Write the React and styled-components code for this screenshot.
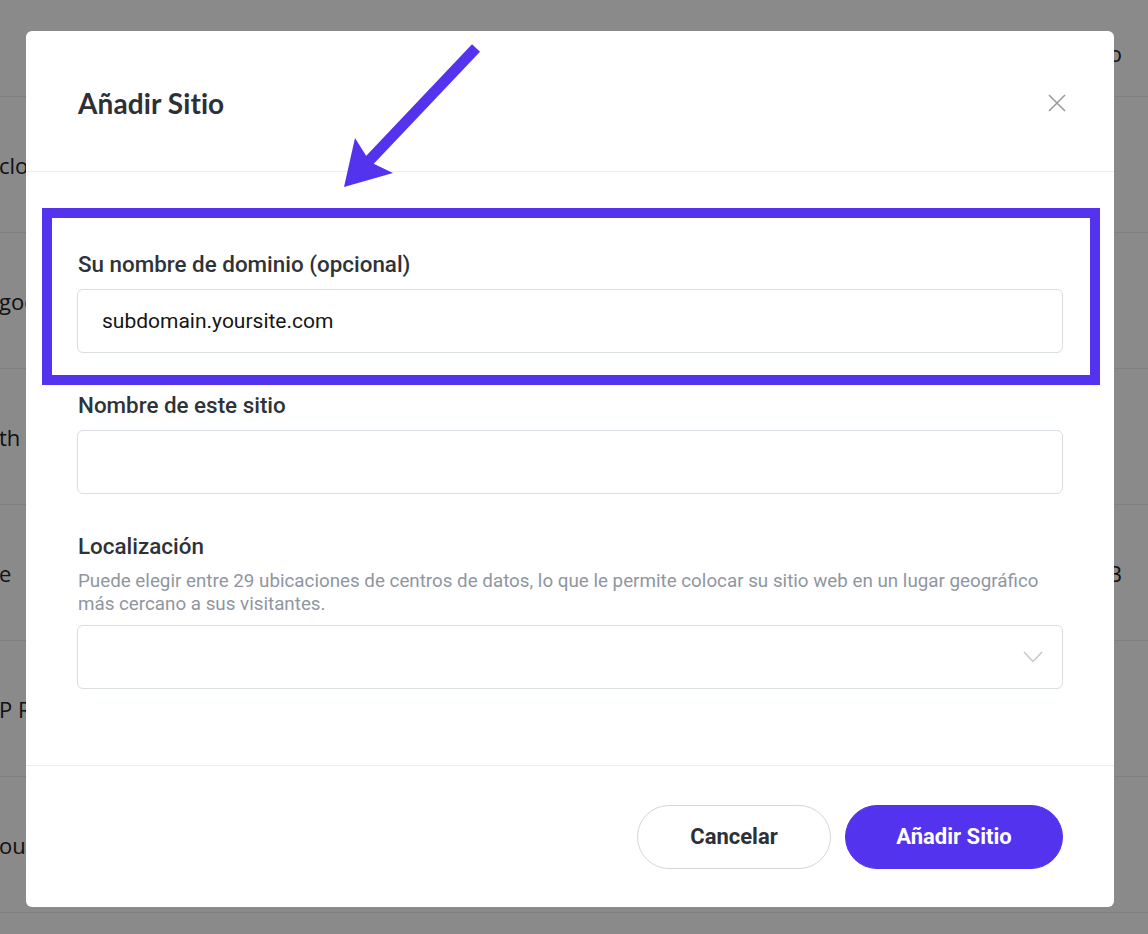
import React from "react";
import styled, { createGlobalStyle } from "styled-components";

const GlobalStyle = createGlobalStyle`
  html, body {
    margin: 0;
    padding: 0;
    background: #fff;
    font-family: Roboto, "Liberation Sans", sans-serif;
  }
  * { box-sizing: border-box; }
`;

const bgRows = [
  { left: "", right: "o", short: true },
  { left: "clou", right: "" },
  { left: "goo", right: "" },
  { left: "th", right: "" },
  { left: "e", right: "B" },
  { left: "P R", right: "" },
  { left: "ouc", right: "" },
];

export default function App() {
  return (
    <>
      <GlobalStyle />
      <Page>
        {bgRows.map((r, i) => (
          <BgRow key={i} $short={r.short}>
            <span>{r.left}</span>
            <span>{r.right}</span>
          </BgRow>
        ))}
      </Page>

      <Overlay>
        <Modal>
          <Arrow width="170" height="170" viewBox="0 0 170 170">
            <line x1="150" y1="17" x2="40" y2="133" stroke="#5333ed" strokeWidth="11" />
            <polygon points="18,156 29,107 44,131 67,142" fill="#5333ed" />
          </Arrow>

          <Header>
            <Title>Añadir Sitio</Title>
            <CloseButton aria-label="Cerrar">
              <svg width="18" height="18" viewBox="0 0 18 18">
                <path d="M1 1 L17 17 M17 1 L1 17" stroke="#9a9a9a" strokeWidth="1.6" />
              </svg>
            </CloseButton>
          </Header>

          <Body>
            <Field>
              <Highlight />
              <Label>Su nombre de dominio (opcional)</Label>
              <Input defaultValue="subdomain.yoursite.com" />
            </Field>

            <Field>
              <Label>Nombre de este sitio</Label>
              <Input />
            </Field>

            <Field $last>
              <Label>Localización</Label>
              <Help>
                Puede elegir entre 29 ubicaciones de centros de datos, lo que le permite
                colocar su sitio web en un lugar geográfico más cercano a sus visitantes.
              </Help>
              <Select>
                <svg width="20" height="12" viewBox="0 0 20 12">
                  <path d="M1 1 L10 10.5 L19 1" fill="none" stroke="#c3c7cd" strokeWidth="1.5" />
                </svg>
              </Select>
            </Field>
          </Body>

          <Footer>
            <Button>Cancelar</Button>
            <Button $primary>Añadir Sitio</Button>
          </Footer>
        </Modal>
      </Overlay>
    </>
  );
}

const Page = styled.div`
  width: 1148px;
  height: 934px;
  overflow: hidden;
  font-family: "Open Sans", "Liberation Sans", sans-serif;
  font-size: 22px;
  color: #222;
`;

const BgRow = styled.div`
  height: ${(p) => (p.$short ? "97px" : "136px")};
  border-bottom: 1px solid #ececec;
  display: flex;
  justify-content: space-between;
  align-items: ${(p) => (p.$short ? "flex-start" : "center")};
  padding-top: ${(p) => (p.$short ? "38px" : "0")};
  margin-left: -1px;

  span:last-child {
    margin-right: 26px;
  }
`;

const Overlay = styled.div`
  position: fixed;
  inset: 0;
  background: rgba(0, 0, 0, 0.46);
  padding: 31px 34px 0 26px;
`;

const Modal = styled.div`
  position: relative;
  width: 1088px;
  height: 876px;
  background: #fff;
  border-radius: 6px;
  display: flex;
  flex-direction: column;
`;

const Arrow = styled.svg`
  position: absolute;
  left: 300px;
  top: 0;
`;

const Header = styled.div`
  height: 141px;
  border-bottom: 1px solid #ececec;
  display: flex;
  align-items: center;
  justify-content: space-between;
  padding: 3px 48px 0 52px;
`;

const Title = styled.h2`
  margin: 0;
  font-family: Lato, "Liberation Sans", sans-serif;
  font-weight: 700;
  font-size: 28px;
  letter-spacing: 0.1px;
  color: #2d3035;
`;

const CloseButton = styled.button`
  border: 0;
  background: none;
  padding: 0;
  display: flex;
  cursor: pointer;
`;

const Body = styled.div`
  flex: 1;
  padding: 78px 51px 0 51px;
`;

const Field = styled.div`
  position: relative;
  margin-bottom: ${(p) => (p.$last ? "0" : "38px")};
`;

const Highlight = styled.div`
  position: absolute;
  left: -35px;
  right: -37px;
  top: -42px;
  bottom: -32px;
  border: 10px solid #5333ed;
  pointer-events: none;
`;

const Label = styled.div`
  font-size: 22.4px;
  font-weight: 500;
  line-height: 28px;
  color: #2e3338;
  margin-bottom: 11px;
  padding-left: 1px;
`;

const Input = styled.input`
  display: block;
  width: 100%;
  height: 64px;
  border: 1px solid #d9dde4;
  border-radius: 6px;
  padding: 0 24px;
  font-family: Roboto, "Liberation Sans", sans-serif;
  font-size: 21px;
  color: #151515;
  outline: none;
`;

const Help = styled.div`
  font-size: 18.8px;
  line-height: 23px;
  color: #8f969f;
  margin-top: -1px;
  margin-bottom: 9px;
  padding-left: 1px;
`;

const Select = styled.div`
  height: 64px;
  border: 1px solid #d9dde4;
  border-radius: 6px;
  display: flex;
  align-items: center;
  justify-content: flex-end;
  padding-right: 19px;
`;

const Footer = styled.div`
  height: 142px;
  border-top: 1px solid #ececec;
  display: flex;
  align-items: center;
  justify-content: flex-end;
  gap: 14px;
  padding: 0 51px 0 0;
`;

const Button = styled.button`
  height: 64px;
  border-radius: 32px;
  padding: 0;
  width: ${(p) => (p.$primary ? "218px" : "194px")};
  border: 1px solid ${(p) => (p.$primary ? "#5333ed" : "#d3d6de")};
  background: ${(p) => (p.$primary ? "#5333ed" : "#fff")};
  color: ${(p) => (p.$primary ? "#fff" : "#2d3035")};
  font-family: Roboto, "Liberation Sans", sans-serif;
  font-size: 22px;
  font-weight: 700;
  cursor: pointer;
`;
